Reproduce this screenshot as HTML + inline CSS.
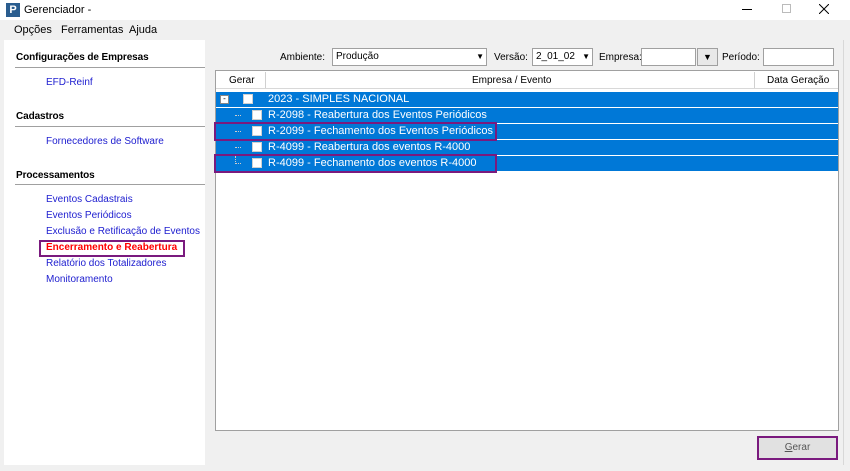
<!DOCTYPE html>
<html><head><meta charset="utf-8"><style>
*{margin:0;padding:0;box-sizing:border-box}
body{width:850px;height:471px;position:relative;background:#f0f0f0;font-family:"Liberation Sans",sans-serif;font-size:10px;color:#000;overflow:hidden}
.a{position:absolute;white-space:nowrap}
.title{left:0;top:0;width:850px;height:20px;background:#fff}
.menu{left:0;top:20px;width:850px;height:20px;background:#f0f0f0}
.left{left:4px;top:40px;width:201px;height:425px;background:#fff}
.h{font-weight:bold;font-size:10px;letter-spacing:-0.1px}
.ln{color:#2020d0}
.grid{left:215px;top:70px;width:624px;height:361px;background:#fff;border:1px solid #a0a0a0}
.row{left:216px;width:622px;height:15px;background:#0078d7;color:#fff;font-size:11px;line-height:15px}
.cb{position:absolute;width:10px;height:10px;background:#fff;border:1px solid #d0d0d0;top:2px}
.inp{background:#fff;border:1px solid #a0a0a0;height:18px;font-size:10px;line-height:16px;padding-left:3px}
.hl{border:2px solid #7a1a7e}
</style></head><body>
<div class="a title"></div>
<div class="a" style="left:6px;top:3px;width:14px;height:14px;background:#2a5d8f;color:#fff;font-weight:bold;font-size:11px;line-height:14px;text-align:center">P</div>
<div class="a" style="left:24px;top:4px;font-size:11px">Gerenciador -</div>
<div class="a" style="left:742px;top:9px;width:10px;height:1px;background:#000"></div>
<div class="a" style="left:782px;top:4px;width:9px;height:9px;border:1px solid #bbb"></div>
<svg class="a" style="left:819px;top:4px" width="10" height="10"><path d="M0 0L10 10M10 0L0 10" stroke="#000" stroke-width="1"/></svg>
<div class="a menu"></div>
<div class="a" style="left:14px;top:24px;font-size:11px">Opções</div>
<div class="a" style="left:61px;top:24px;font-size:11px">Ferramentas</div>
<div class="a" style="left:129px;top:24px;font-size:11px">Ajuda</div>
<div class="a left"></div>
<div class="a h" style="left:16px;top:52px">Configurações de Empresas</div>
<div class="a" style="left:15px;top:67px;width:190px;height:1px;background:#a0a0a0"></div>
<div class="a ln" style="left:46px;top:77px">EFD-Reinf</div>
<div class="a h" style="left:16px;top:111px">Cadastros</div>
<div class="a" style="left:15px;top:126px;width:190px;height:1px;background:#a0a0a0"></div>
<div class="a ln" style="left:46px;top:136px">Fornecedores de Software</div>
<div class="a h" style="left:16px;top:170px">Processamentos</div>
<div class="a" style="left:15px;top:184px;width:190px;height:1px;background:#a0a0a0"></div>
<div class="a ln" style="left:46px;top:194px">Eventos Cadastrais</div>
<div class="a ln" style="left:46px;top:210px">Eventos Periódicos</div>
<div class="a ln" style="left:46px;top:226px">Exclusão e Retificação de Eventos</div>
<div class="a hl" style="left:39px;top:240px;width:146px;height:17px"></div>
<div class="a" style="left:46px;top:242px;color:#f00;font-weight:bold">Encerramento e Reabertura</div>
<div class="a ln" style="left:46px;top:258px">Relatório dos Totalizadores</div>
<div class="a ln" style="left:46px;top:274px">Monitoramento</div>

<div class="a" style="left:280px;top:52px">Ambiente:</div>
<div class="a inp" style="left:332px;top:48px;width:155px">Produção<span style="position:absolute;right:2px;top:0;font-size:8px">▼</span></div>
<div class="a" style="left:494px;top:52px">Versão:</div>
<div class="a inp" style="left:532px;top:48px;width:61px">2_01_02<span style="position:absolute;right:2px;top:0;font-size:8px">▼</span></div>
<div class="a" style="left:599px;top:52px">Empresa:</div>
<div class="a inp" style="left:641px;top:48px;width:55px"></div>
<div class="a" style="left:697px;top:48px;width:21px;height:18px;background:#e8e8e8;border:1px solid #a0a0a0;font-size:9px;text-align:center;line-height:16px">▼</div>
<div class="a" style="left:722px;top:52px">Período:</div>
<div class="a inp" style="left:763px;top:48px;width:71px"></div>

<div class="a grid"></div>
<div class="a" style="left:216px;top:71px;width:622px;height:18px;background:#fff;border-bottom:1px solid #d8d8d8"></div>
<div class="a" style="left:229px;top:75px">Gerar</div>
<div class="a" style="left:265px;top:72px;width:1px;height:16px;background:#d0d0d0"></div>
<div class="a" style="left:472px;top:75px">Empresa / Evento</div>
<div class="a" style="left:754px;top:72px;width:1px;height:16px;background:#d0d0d0"></div>
<div class="a" style="left:767px;top:75px">Data Geração</div>

<div class="a row" style="top:92px"><span class="a" style="left:4px;top:3px;width:9px;height:9px;background:#fff;border:1px solid #888;font-size:8px;line-height:6px;color:#000;text-align:center">-</span><span class="cb" style="left:27px"></span><span class="a" style="left:52px;top:0">2023 - SIMPLES NACIONAL</span></div>
<div class="a row" style="top:108px"><span class="a" style="left:19px;top:7px;width:6px;border-top:1px dotted #ccc"></span><span class="cb" style="left:36px"></span><span class="a" style="left:52px">R-2098 - Reabertura dos Eventos Periódicos</span></div>
<div class="a row" style="top:124px"><span class="a" style="left:19px;top:7px;width:6px;border-top:1px dotted #ccc"></span><span class="cb" style="left:36px"></span><span class="a" style="left:52px">R-2099 - Fechamento dos Eventos Periódicos</span></div>
<div class="a row" style="top:140px"><span class="a" style="left:19px;top:7px;width:6px;border-top:1px dotted #ccc"></span><span class="cb" style="left:36px"></span><span class="a" style="left:52px">R-4099 - Reabertura dos eventos R-4000</span></div>
<div class="a row" style="top:156px"><span class="a" style="left:19px;top:0;width:6px;height:8px;border-left:1px dotted #ccc;border-bottom:1px dotted #ccc"></span><span class="cb" style="left:36px"></span><span class="a" style="left:52px">R-4099 - Fechamento dos eventos R-4000</span></div>
<div class="a hl" style="left:214px;top:122px;width:283px;height:19px"></div>
<div class="a hl" style="left:214px;top:154px;width:283px;height:19px"></div>

<div class="a" style="left:757px;top:436px;width:81px;height:24px;border:2px solid #7a1a7e;background:#e1e1e1;text-align:center;line-height:20px;color:#555"><u>G</u>erar</div>
<div class="a" style="left:843px;top:40px;width:1px;height:425px;background:#d8d8d8"></div>
</body></html>
